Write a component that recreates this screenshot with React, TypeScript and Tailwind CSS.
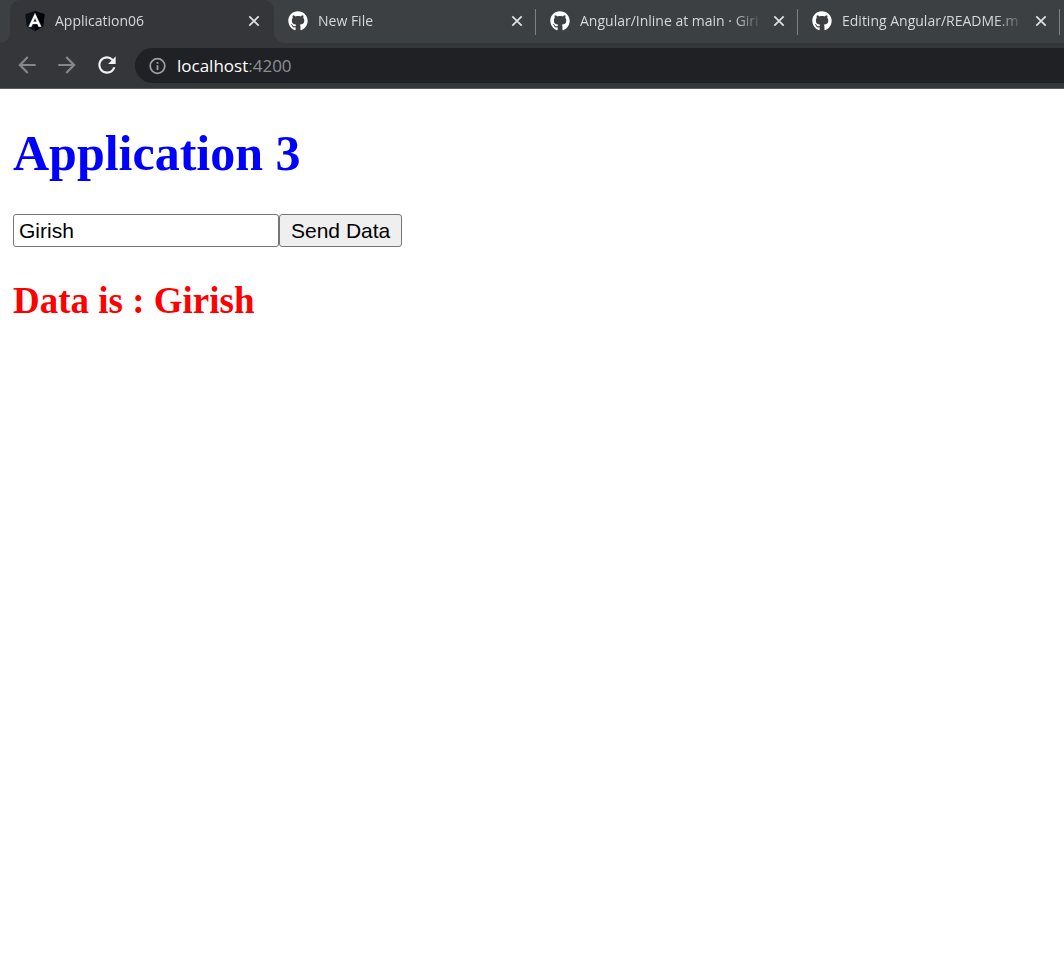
import { useState } from "react";
import type { FormEvent } from "react";
import { FaGithub } from "react-icons/fa";
import { MdArrowBack, MdArrowForward, MdRefresh } from "react-icons/md";

function AngularIcon() {
  return (
    <svg viewBox="0 0 20 20" className="size-5 shrink-0" aria-hidden="true">
      <path d="M10 0 19.6 3.3 18.2 15.4 10 20 1.8 15.4.4 3.3Z" fill="#0b0f18" />
      <path d="M10 0 19.6 3.3 18.2 15.4 10 20Z" fill="#00030a" />
      <path
        fillRule="evenodd"
        d="M10 2.2 3.7 15.7H6.4L7.6 12.9H12.4L13.6 15.7H16.3ZM10 6.9 11.6 10.7H8.4Z"
        fill="#fff"
        stroke="#fff"
        strokeWidth="0.3"
      />
    </svg>
  );
}

function InfoIcon() {
  return (
    <svg viewBox="0 0 20 20" className="size-5 shrink-0 text-[#9aa0a6]" fill="none" aria-hidden="true">
      <circle cx="10.5" cy="10" r="7.3" stroke="currentColor" strokeWidth="1.7" />
      <path d="M9.6 9.2H11.4V14H9.6ZM9.6 6H11.4V7.8H9.6Z" fill="currentColor" />
    </svg>
  );
}

function CloseButton({ title }: { title: string }) {
  return (
    <button type="button" aria-label={`Close ${title}`} className="shrink-0 text-[#dfe1e3]">
      <svg viewBox="0 0 12 12" className="size-3" fill="none" stroke="currentColor" strokeWidth="1.7">
        <path d="M1.3 1.3 10.7 10.7M10.7 1.3 1.3 10.7" />
      </svg>
    </button>
  );
}

function Tab({ title, active = false }: { title: string; active?: boolean }) {
  return (
    <div className={`flex h-full shrink-0 items-center ${active ? "w-[264px] pl-[15px]" : "w-[262px] pl-[14px]"}`}>
      <div className={`flex min-w-0 flex-1 items-center pb-[2px] ${active ? "pr-[14px]" : "pr-3"}`}>
        {active ? <AngularIcon /> : <FaGithub className="size-5 shrink-0 text-white" aria-hidden="true" />}
        <span className="ml-[10px] min-w-0 flex-1 overflow-hidden whitespace-nowrap text-sm text-[#d5d7da] [mask-image:linear-gradient(to_right,black_calc(100%-30px),transparent)]">
          {title}
        </span>
        <span className="ml-[10px] flex">
          <CloseButton title={title} />
        </span>
      </div>
      {!active && <div className="h-[26px] w-px bg-[#7d8084]" />}
    </div>
  );
}

function Browser() {
  return (
    <header className="border-b border-[#5b5c5f] bg-[#35363a] font-['Open_Sans','Noto_Sans',sans-serif]">
      <nav aria-label="Tabs" className="flex h-[43px] overflow-hidden">
        <div className="w-[10px] shrink-0 rounded-br-[10px] bg-[#3c4043]" />
        <div className="shrink-0 bg-[linear-gradient(#3c4043_50%,#35363a_50%)]">
          <div className="h-full rounded-t-[10px] bg-[#35363a]">
            <Tab title="Application06" active />
          </div>
        </div>
        <div className="flex min-w-0 flex-1 overflow-hidden rounded-bl-[10px] bg-[#3c4043]">
          <Tab title="New File" />
          <Tab title="Angular/Inline at main · Giri" />
          <Tab title="Editing Angular/README.m" />
        </div>
      </nav>
      <div className="flex h-[45px] items-center pl-[14px]">
        <div className="flex gap-[14px] pb-[2px] text-[#85878a]">
          <button type="button" aria-label="Back">
            <MdArrowBack className="size-[26px]" />
          </button>
          <button type="button" aria-label="Forward">
            <MdArrowForward className="size-[26px]" />
          </button>
          <button type="button" aria-label="Reload" className="text-[#f1f1f1]">
            <MdRefresh className="size-[26px]" />
          </button>
        </div>
        <div className="ml-[15px] flex h-[35px] flex-1 items-center rounded-l-full bg-[#202124] pl-3">
          <InfoIcon />
          <p className="ml-[10px] text-[17px] leading-6 text-[#8b8f94]">
            <span className="text-white">localhost</span>:4200
          </p>
        </div>
      </div>
    </header>
  );
}

export default function App() {
  const [value, setValue] = useState("Girish");
  const [data, setData] = useState("Girish");

  const send = (event: FormEvent) => {
    event.preventDefault();
    setData(value);
  };

  return (
    <div className="min-h-screen bg-white">
      <Browser />
      <main className="px-[13px] pt-9 font-['Liberation_Serif',serif] font-bold">
        <h1 className="text-[50px] leading-[56px] text-[#0000ff]">Application 3</h1>
        <form onSubmit={send} className="mt-[33px] flex font-['Liberation_Sans',sans-serif] font-normal text-black">
          <input
            aria-label="Data"
            value={value}
            onChange={(event) => setValue(event.target.value)}
            className="h-[33px] w-[266px] rounded-[3px] border border-[#767676] bg-white px-[5px] text-[21px] outline-none"
          />
          <button
            type="submit"
            className="h-[33px] rounded-[3px] border border-[#767676] bg-[#efefef] px-[11px] text-[21px] leading-6"
          >
            Send Data
          </button>
        </form>
        <h2 className="mt-8 text-[37px] leading-[44px] text-[#ff0000]">Data is : {data}</h2>
      </main>
    </div>
  );
}
